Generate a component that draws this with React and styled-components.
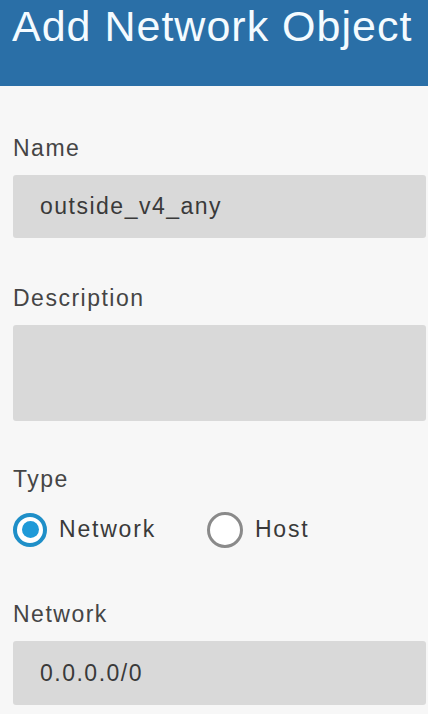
import React, { useState } from "react";
import styled, { createGlobalStyle } from "styled-components";

const GlobalStyle = createGlobalStyle`
  html, body {
    margin: 0;
    padding: 0;
    background: #f7f7f7;
  }
  body {
    font-family: "Liberation Sans", Arial, sans-serif;
    color: #3a3a3a;
  }
`;

const Page = styled.div`
  width: 428px;
  height: 714px;
  overflow: hidden;
  background: #f7f7f7;
`;

const Header = styled.header`
  height: 86px;
  background: #2a6fa7;
  padding: 5px 0 0 12px;
  box-sizing: border-box;
`;

const Title = styled.h1`
  margin: 0;
  font-size: 43px;
  line-height: 43px;
  font-weight: 400;
  letter-spacing: 1px;
  color: #f4fbff;
  white-space: nowrap;
`;

const Form = styled.form`
  display: flex;
  flex-direction: column;
  padding: 51px 2px 0 13px;
`;

const Field = styled.div`
  display: flex;
  flex-direction: column;
  gap: ${(p) => p.$gap || 15}px;
  margin-top: ${(p) => p.$top || 0}px;
`;

const Label = styled.label`
  font-size: 23px;
  line-height: 23px;
  letter-spacing: 1.5px;
  color: #454545;
`;

const Input = styled.div`
  height: ${(p) => p.$height || 63}px;
  background: #d9d9d9;
  border-radius: 3px;
  padding: 0 27px;
  display: flex;
  align-items: ${(p) => (p.$multi ? "flex-start" : "center")};
  font-size: 23px;
  line-height: 23px;
  letter-spacing: 1.5px;
  color: #3a3a3a;
`;

const RadioRow = styled.div`
  display: flex;
  align-items: center;
  gap: 51px;
  height: 35px;
`;

const RadioOption = styled.div`
  display: flex;
  align-items: center;
  gap: 12px;
  cursor: pointer;
`;

const RadioCircle = styled.span`
  box-sizing: border-box;
  width: ${(p) => (p.$checked ? 34 : 36)}px;
  height: ${(p) => (p.$checked ? 34 : 36)}px;
  border-radius: 50%;
  border: ${(p) => (p.$checked ? "4px solid #1f8fc8" : "3px solid #8a8a8a")};
  background: #fff;
  display: flex;
  align-items: center;
  justify-content: center;

  &::after {
    content: "";
    display: ${(p) => (p.$checked ? "block" : "none")};
    width: 17px;
    height: 17px;
    border-radius: 50%;
    background: #1f9ad8;
  }
`;

const RadioText = styled.span`
  font-size: 23px;
  line-height: 23px;
  letter-spacing: 1.8px;
  color: #3a3a3a;
`;

const App = () => {
  const [type, setType] = useState("network");

  return (
    <Page>
      <GlobalStyle />
      <Header>
        <Title>Add Network Object</Title>
      </Header>
      <Form>
        <Field>
          <Label>Name</Label>
          <Input>outside_v4_any</Input>
        </Field>
        <Field $top={49}>
          <Label>Description</Label>
          <Input $height={96} $multi />
        </Field>
        <Field $top={47} $gap={21}>
          <Label>Type</Label>
          <RadioRow>
            <RadioOption onClick={() => setType("network")}>
              <RadioCircle $checked={type === "network"} />
              <RadioText>Network</RadioText>
            </RadioOption>
            <RadioOption onClick={() => setType("host")}>
              <RadioCircle $checked={type === "host"} />
              <RadioText>Host</RadioText>
            </RadioOption>
          </RadioRow>
        </Field>
        <Field $top={56}>
          <Label>Network</Label>
          <Input $height={64}>0.0.0.0/0</Input>
        </Field>
      </Form>
    </Page>
  );
};

export default App;
